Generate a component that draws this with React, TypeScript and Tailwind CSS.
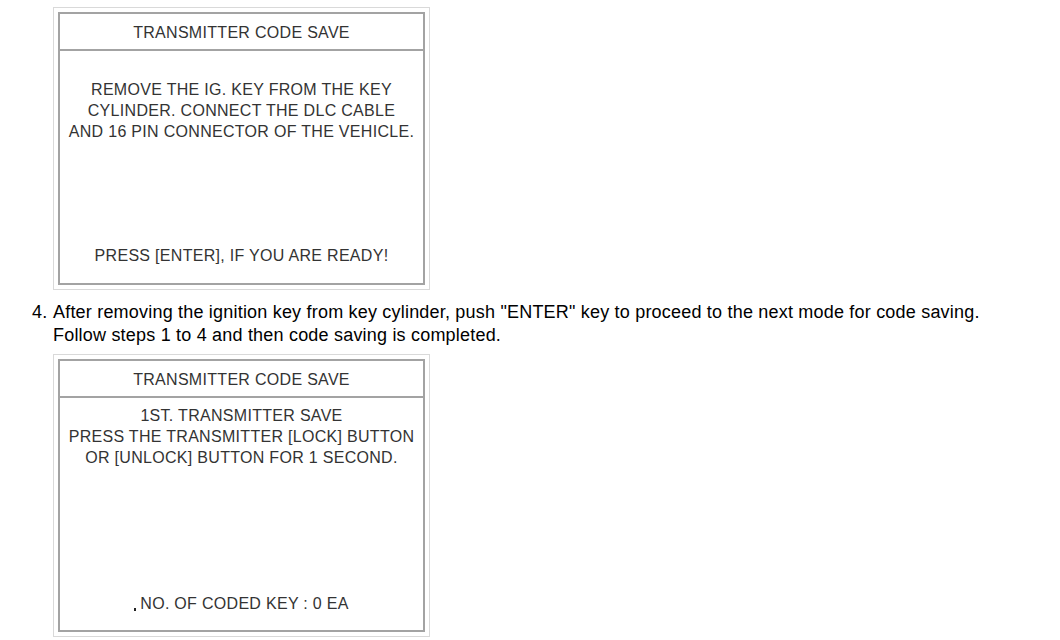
import React from "react";

type ScreenProps = {
  lines: string[];
  footer: React.ReactNode;
  bodyPad: string;
};

const Screen = ({ lines, footer, bodyPad }: ScreenProps) => {
  return (
    <div className="w-[377px] h-[283px] border border-[#d9d9d9] p-[4px] bg-white">
      <div className="h-full flex flex-col border-2 border-[#a3a3a3] text-[#333] text-[16px] leading-[21px] tracking-[0.3px]">
        <div className="h-[37px] pt-[2px] flex items-center justify-center border-b-2 border-[#a3a3a3] shrink-0">
          TRANSMITTER CODE SAVE
        </div>
        <div className={"flex-1 flex flex-col justify-between items-center text-center " + bodyPad}>
          <div>
            {lines.map((l) => (
              <div key={l}>{l}</div>
            ))}
          </div>
          <div>{footer}</div>
        </div>
      </div>
    </div>
  );
};

const App = () => {
  return (
    <div className="w-[1060px] h-[640px] bg-white overflow-hidden font-['Liberation_Sans',Arial,sans-serif]">
      <div className="pt-[7px] pl-[53px]">
        <Screen
          bodyPad="pt-[28px] pb-[17px]"
          lines={[
            "REMOVE THE IG. KEY FROM THE KEY",
            "CYLINDER. CONNECT THE DLC CABLE",
            "AND 16 PIN CONNECTOR OF THE VEHICLE.",
          ]}
          footer="PRESS [ENTER], IF YOU ARE READY!"
        />
      </div>

      <div className="flex mt-[11px] pl-[32px] text-[18px] leading-[23px] tracking-[0.2px] text-black">
        <span className="w-[21px] shrink-0">4.</span>
        <div>
          <p className="whitespace-nowrap">
            After removing the ignition key from key cylinder, push "ENTER" key to proceed to the next mode for code saving.
          </p>
          <p>Follow steps 1 to 4 and then code saving is completed.</p>
          <div className="mt-[7px]">
            <Screen
              bodyPad="pt-[7px] pb-[16px]"
              lines={[
                "1ST. TRANSMITTER SAVE",
                "PRESS THE TRANSMITTER [LOCK] BUTTON",
                "OR [UNLOCK] BUTTON FOR 1 SECOND.",
              ]}
              footer={
                <span className="flex items-end">
                  <span className="w-[2px] h-[3px] bg-[#222] mr-[4px] mb-[3px]"></span>
                  NO. OF CODED KEY : 0 EA
                </span>
              }
            />
          </div>
        </div>
      </div>
    </div>
  );
};

export default App;
